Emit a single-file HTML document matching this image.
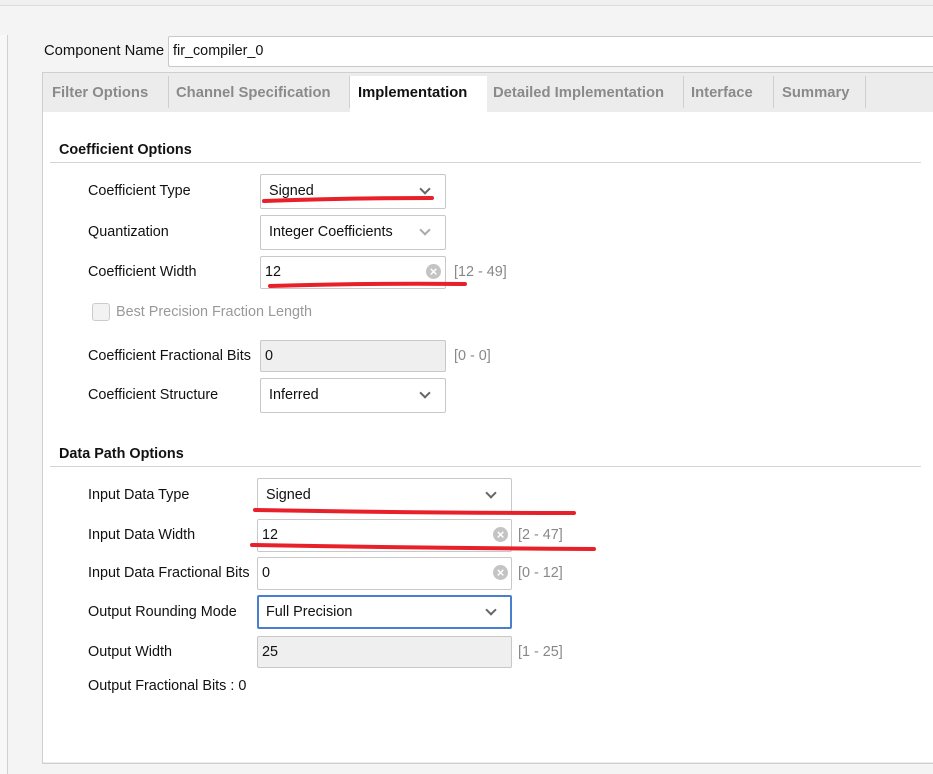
<html><head><style>
body{margin:0;width:933px;height:774px;background:#f4f4f4;font-family:"Liberation Sans",sans-serif;font-size:14.4px;color:#111;position:relative;overflow:hidden}
div,span{position:absolute;box-sizing:border-box}
.t{white-space:nowrap;line-height:16px}
.box{background:#fff;border:1px solid #c8c8c8;border-radius:2px}
.g{background:#efefef}
.tab{top:85px;color:#8a8a8a;font-weight:bold;font-size:14.8px}
.sep{top:76px;width:1px;height:32px;background:#cfcfcf}
.rng{color:#888}
.chev{width:8px;height:8px;border-right:2px solid #666;border-bottom:2px solid #666;transform:rotate(45deg)}
.clr{width:15px;height:15px;border-radius:50%;background:#c4c4c4;color:#fff;font-size:13px;line-height:15px;text-align:center;font-weight:bold}
</style></head><body>
<div style="left:0;top:0;width:933px;height:6px;background:#f0f0f0;border-bottom:1px solid #dcdcdc"></div>
<div style="left:0;top:35px;width:8px;height:739px;background:#f8f8f8;border-right:1px solid #d0d0d0"></div>
<span class="t" style="left:44px;top:43px;font-size:14.8px">Component Name</span>
<div class="box" style="left:168px;top:36px;width:780px;height:31px"></div>
<span class="t" style="left:173px;top:43px">fir_compiler_0</span>
<div style="left:42px;top:72px;width:900px;height:692px;border:1px solid #cfcfcf;background:#ececec"></div>
<div style="left:43px;top:112px;width:900px;height:650px;background:#fff"></div>
<div style="left:350px;top:76px;width:137px;height:37px;background:#fff"></div>
<span class="t tab" style="left:52px">Filter Options</span>
<div class="sep" style="left:168px"></div>
<span class="t tab" style="left:176px">Channel Specification</span>
<div class="sep" style="left:349px"></div>
<span class="t tab" style="left:358px;color:#111">Implementation</span>
<span class="t tab" style="left:493px">Detailed Implementation</span>
<div class="sep" style="left:683px"></div>
<span class="t tab" style="left:691px">Interface</span>
<div class="sep" style="left:773px"></div>
<span class="t tab" style="left:782px">Summary</span>
<div class="sep" style="left:865px"></div>

<span class="t" style="left:59px;top:142px;font-weight:bold">Coefficient Options</span>
<div style="left:50px;top:162px;width:871px;height:1px;background:#d4d4d4"></div>
<span class="t" style="left:88px;top:183px">Coefficient Type</span>
<div class="box" style="left:260px;top:174px;width:186px;height:35px"></div>
<span class="t" style="left:269px;top:183px">Signed</span><div class="chev" style="left:421px;top:185px"></div>
<span class="t" style="left:88px;top:224px">Quantization</span>
<div class="box" style="left:260px;top:215px;width:186px;height:35px"></div>
<span class="t" style="left:269px;top:224px">Integer Coefficients</span><div class="chev" style="left:421px;top:226px;border-color:#aaa"></div>
<span class="t" style="left:88px;top:264px">Coefficient Width</span>
<div class="box" style="left:260px;top:256px;width:186px;height:33px"></div>
<span class="t" style="left:265px;top:264px">12</span><div class="clr" style="left:426px;top:264px">×</div>
<span class="t rng" style="left:454px;top:264px">[12 - 49]</span>
<div style="left:92px;top:303px;width:18px;height:18px;border:1px solid #ccc;border-radius:3px;background:#f2f2f2"></div>
<span class="t" style="left:116px;top:304px;color:#999">Best Precision Fraction Length</span>
<span class="t" style="left:88px;top:348px">Coefficient Fractional Bits</span>
<div class="box g" style="left:260px;top:340px;width:186px;height:32px"></div>
<span class="t" style="left:265px;top:348px">0</span>
<span class="t rng" style="left:454px;top:348px">[0 - 0]</span>
<span class="t" style="left:88px;top:387px">Coefficient Structure</span>
<div class="box" style="left:260px;top:378px;width:186px;height:35px"></div>
<span class="t" style="left:269px;top:387px">Inferred</span><div class="chev" style="left:421px;top:389px"></div>

<span class="t" style="left:59px;top:446px;font-weight:bold">Data Path Options</span>
<div style="left:50px;top:466px;width:871px;height:1px;background:#d4d4d4"></div>
<span class="t" style="left:88px;top:487px">Input Data Type</span>
<div class="box" style="left:257px;top:478px;width:255px;height:34px"></div>
<span class="t" style="left:266px;top:487px">Signed</span><div class="chev" style="left:487px;top:489px"></div>
<span class="t" style="left:88px;top:527px">Input Data Width</span>
<div class="box" style="left:257px;top:519px;width:255px;height:33px"></div>
<span class="t" style="left:262px;top:527px">12</span><div class="clr" style="left:493px;top:527px">×</div>
<span class="t rng" style="left:518px;top:527px">[2 - 47]</span>
<span class="t" style="left:88px;top:565px">Input Data Fractional Bits</span>
<div class="box" style="left:257px;top:557px;width:255px;height:33px"></div>
<span class="t" style="left:262px;top:565px">0</span><div class="clr" style="left:493px;top:565px">×</div>
<span class="t rng" style="left:518px;top:565px">[0 - 12]</span>
<span class="t" style="left:88px;top:604px">Output Rounding Mode</span>
<div class="box" style="left:257px;top:595px;width:255px;height:34px;border:2px solid #4a7fd0"></div>
<span class="t" style="left:266px;top:604px">Full Precision</span><div class="chev" style="left:487px;top:606px"></div>
<span class="t" style="left:88px;top:644px">Output Width</span>
<div class="box g" style="left:257px;top:636px;width:255px;height:32px"></div>
<span class="t" style="left:262px;top:644px">25</span>
<span class="t rng" style="left:518px;top:644px">[1 - 25]</span>
<span class="t" style="left:88px;top:678px">Output Fractional Bits : 0</span>

<svg style="position:absolute;left:0;top:0" width="933" height="774">
<g stroke="#e8202a" stroke-width="4" stroke-linecap="round" fill="none">
<path d="M264 201 Q350 198 432 198"/>
<path d="M270 286 Q370 283 465 284"/>
<path d="M255 510 Q420 513 574 513"/>
<path d="M252 545 Q420 548 594 549"/>
</g></svg>
</body></html>
